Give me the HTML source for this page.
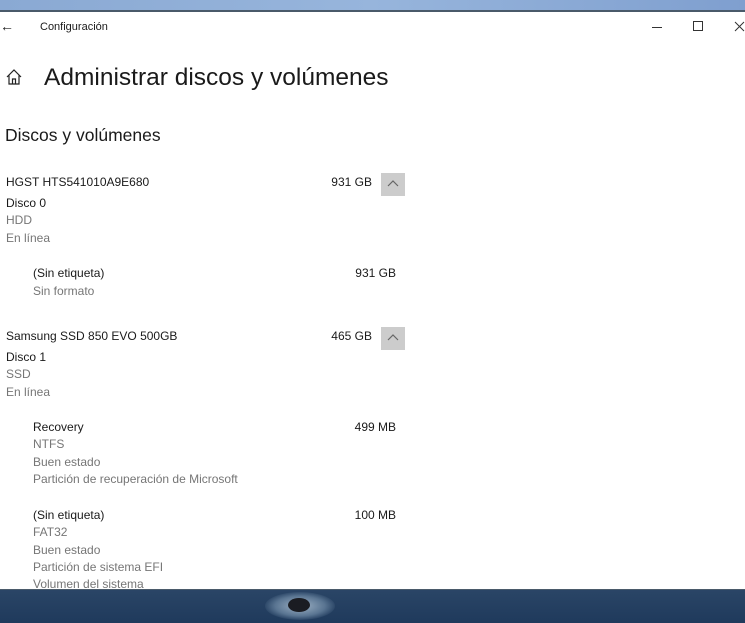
<!DOCTYPE html>
<html><head><meta charset="utf-8"><style>
body{margin:0;width:745px;height:622px;overflow:hidden;background:#fff;position:relative;font-family:"Liberation Sans",sans-serif;color:#1a1a1a}
.t{position:absolute;font-size:12px;line-height:16px;white-space:nowrap}
.g{color:#767676}
.r{text-align:right}
</style></head><body>
<div style="position:absolute;left:0;top:0;width:745px;height:10px;background:linear-gradient(90deg,#8aa9d3,#97b5dc 50%,#7f9fcf)"></div>
<div style="position:absolute;left:0;top:10px;width:745px;height:2px;background:#4a5a6a"></div>
<div class="t" style="left:0;top:18px;font-size:14px">&#8592;</div>
<div class="t" style="left:40px;top:19px;font-size:11px">Configuración</div>
<div style="position:absolute;left:652px;top:27px;width:10px;height:1px;background:#333"></div>
<div style="position:absolute;left:693px;top:21px;width:8px;height:8px;border:1px solid #333"></div>
<svg style="position:absolute;left:734px;top:21px" width="11" height="11"><path d="M1 1 L10 10 M10 1 L1 10" stroke="#333" stroke-width="1"/></svg>
<svg style="position:absolute;left:5px;top:68px" width="18" height="18" viewBox="0 0 18 18"><path d="M2 9 L9 2 L16 9 M4 7.5 V16 H14 V7.5 M7.5 16 V11 H10.5 V16" fill="none" stroke="#222" stroke-width="1.2"/></svg>
<div class="t" style="left:44px;top:62px;font-size:24.5px;line-height:32px">Administrar discos y volúmenes</div>
<div class="t" style="left:5px;top:124px;font-size:17.5px;line-height:22px">Discos y volúmenes</div>

<div class="t" style="left:6px;top:174px">HGST HTS541010A9E680</div>
<div class="t r" style="left:300px;width:72px;top:174px">931 GB</div>
<div style="position:absolute;left:381px;top:173px;width:24px;height:23px;background:#cccccc"></div>
<svg style="position:absolute;left:386px;top:178px" width="14" height="12"><path d="M2 8 L7 3 L12 8" fill="none" stroke="#666" stroke-width="1.2"/></svg>
<div class="t" style="left:6px;top:195px">Disco 0</div>
<div class="t g" style="left:6px;top:212px">HDD</div>
<div class="t g" style="left:6px;top:230px">En línea</div>
<div class="t" style="left:33px;top:265px">(Sin etiqueta)</div>
<div class="t r" style="left:320px;width:76px;top:265px">931 GB</div>
<div class="t g" style="left:33px;top:283px">Sin formato</div>

<div class="t" style="left:6px;top:328px">Samsung SSD 850 EVO 500GB</div>
<div class="t r" style="left:300px;width:72px;top:328px">465 GB</div>
<div style="position:absolute;left:381px;top:327px;width:24px;height:23px;background:#cccccc"></div>
<svg style="position:absolute;left:386px;top:332px" width="14" height="12"><path d="M2 8 L7 3 L12 8" fill="none" stroke="#666" stroke-width="1.2"/></svg>
<div class="t" style="left:6px;top:349px">Disco 1</div>
<div class="t g" style="left:6px;top:366px">SSD</div>
<div class="t g" style="left:6px;top:384px">En línea</div>
<div class="t" style="left:33px;top:419px">Recovery</div>
<div class="t r" style="left:320px;width:76px;top:419px">499 MB</div>
<div class="t g" style="left:33px;top:436px">NTFS</div>
<div class="t g" style="left:33px;top:454px">Buen estado</div>
<div class="t g" style="left:33px;top:471px">Partición de recuperación de Microsoft</div>
<div class="t" style="left:33px;top:507px">(Sin etiqueta)</div>
<div class="t r" style="left:320px;width:76px;top:507px">100 MB</div>
<div class="t g" style="left:33px;top:524px">FAT32</div>
<div class="t g" style="left:33px;top:542px">Buen estado</div>
<div class="t g" style="left:33px;top:559px">Partición de sistema EFI</div>
<div class="t g" style="left:33px;top:576px">Volumen del sistema</div>

<div style="position:absolute;left:0;top:589px;width:745px;height:33px;background:linear-gradient(180deg,#2a4566,#1f3a5c);border-top:1px solid #4a5a6a"></div>
<div style="position:absolute;left:265px;top:592px;width:70px;height:28px;border-radius:50%;background:radial-gradient(ellipse,#9fb3c6 0%,#5a7592 50%,rgba(31,58,92,0) 75%)"></div>
<div style="position:absolute;left:288px;top:598px;width:22px;height:14px;border-radius:50%;background:#1a1c22"></div>
</body></html>
